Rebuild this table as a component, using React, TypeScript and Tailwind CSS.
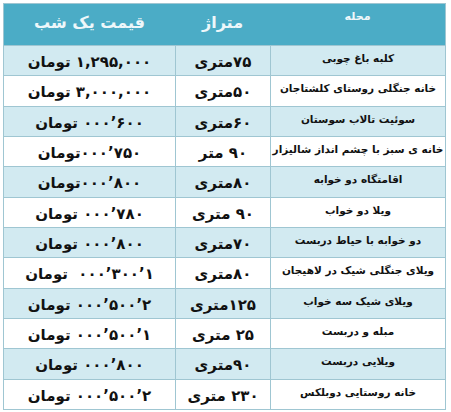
import React from 'react';

type Row = { name: string; area: string; price: string };

const rows: Row[] = [
  { name: 'کلبه باغ چوبی', area: '۷۵متری', price: '۱,۲۹۵,۰۰۰ تومان' },
  { name: 'خانه جنگلی روستای کلشتاجان', area: '۵۰متری', price: '۳,۰۰۰,۰۰۰ تومان' },
  { name: 'سوئیت تالاب سوستان', area: '۶۰متری', price: '۶۰۰’۰۰۰ تومان' },
  { name: 'خانه ی سبز با چشم انداز شالیزار', area: '۹۰ متر', price: '۷۵۰’۰۰۰تومان' },
  { name: 'اقامتگاه دو خوابه', area: '۸۰متری', price: '۸۰۰’۰۰۰تومان' },
  { name: 'ویلا دو خواب', area: '۹۰ متری', price: '۷۸۰’۰۰۰ تومان' },
  { name: 'دو خوابه با حیاط دربست', area: '۷۰متری', price: '۸۰۰’۰۰۰ تومان' },
  { name: 'ویلای جنگلی شیک در لاهیجان', area: '۸۰متری', price: '۱’۳۰۰’۰۰۰  تومان' },
  { name: 'ویلای شیک سه خواب', area: '۱۲۵متری', price: '۲’۵۰۰’۰۰۰ تومان' },
  { name: 'مبله و دربست', area: '۲۵ متری', price: '۱’۵۰۰’۰۰۰ تومان' },
  { name: 'ویلایی دربست', area: '۹۰متری', price: '۸۰۰’۰۰۰ تومان' },
  { name: 'خانه روستایی دوبلکس', area: '۲۳۰ متری', price: '۲’۵۰۰’۰۰۰ تومان' },
];

export default function App() {
  return (
    <div className="w-[451px] h-[412px] bg-white pt-[3px] pl-[3px]" style={{ fontFamily: '"DejaVu Sans", sans-serif' }}>
      <div dir="rtl" className="w-[443px] border border-[#9fc6d2] text-[#111]">
        {/* header */}
        <div className="flex h-[41px] bg-[#4bacc6] text-[#eef7fa] font-bold">
          <div className="w-[175px] flex justify-center pt-[5px] text-[11px]">محله</div>
          <div className="w-[95px] flex justify-center pt-[7px] text-[16px]">متراژ</div>
          <div className="flex-1 flex justify-center pt-[7px] text-[16px]">قیمت یک شب</div>
        </div>

        {rows.map((r, i) => (
          <div
            key={i}
            className={`flex h-[30.33px] border-t border-[#9fc6d2] font-bold ${i % 2 === 0 ? 'bg-[#d2eaf1]' : 'bg-white'}`}
          >
            <div className="w-[175px] flex justify-center items-start pt-[5px] text-[10.5px] border-l border-[#9fc6d2] whitespace-nowrap">
              {r.name}
            </div>
            <div className="w-[95px] flex justify-center items-center pt-[3px] text-[15px] border-l border-[#9fc6d2] whitespace-nowrap">
              {r.area}
            </div>
            <div className="flex-1 flex justify-center items-center pt-[3px] text-[15px] whitespace-pre">
              {r.price}
            </div>
          </div>
        ))}
      </div>
    </div>
  );
}
